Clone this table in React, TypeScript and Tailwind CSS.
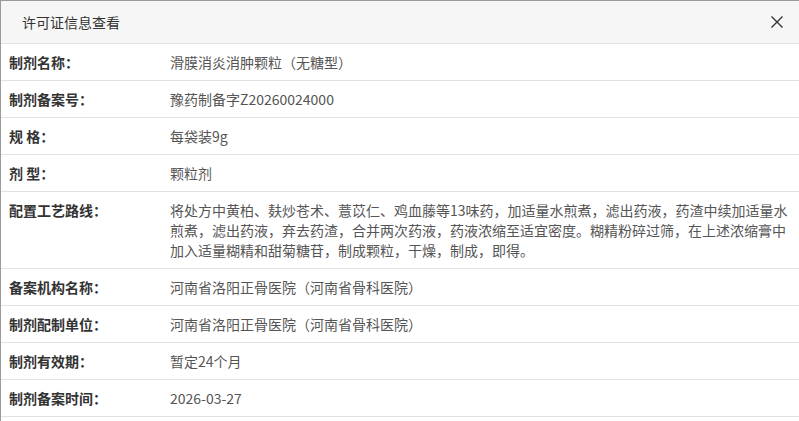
import React from "react";

const rows: { label: string; value: string; multi?: boolean }[] = [
  { label: "制剂名称：", value: "滑膜消炎消肿颗粒（无糖型）" },
  { label: "制剂备案号：", value: "豫药制备字Z20260024000" },
  { label: "规 格：", value: "每袋装9g" },
  { label: "剂 型：", value: "颗粒剂" },
  {
    label: "配置工艺路线：",
    value:
      "将处方中黄柏、麸炒苍术、薏苡仁、鸡血藤等13味药，加适量水煎煮，滤出药液，药渣中续加适量水煎煮，滤出药液，弃去药渣，合并两次药液，药液浓缩至适宜密度。糊精粉碎过筛，在上述浓缩膏中加入适量糊精和甜菊糖苷，制成颗粒，干燥，制成，即得。",
    multi: true,
  },
  { label: "备案机构名称：", value: "河南省洛阳正骨医院（河南省骨科医院）" },
  { label: "制剂配制单位：", value: "河南省洛阳正骨医院（河南省骨科医院）" },
  { label: "制剂有效期：", value: "暂定24个月" },
  { label: "制剂备案时间：", value: "2026-03-27" },
];

export default function App() {
  return (
    <div
      className="w-[799px] h-[421px] overflow-hidden bg-white border-t border-l border-[#9a9a9a]"
      style={{ fontFamily: '"Microsoft YaHei", "Noto Sans CJK SC", "Noto Sans", sans-serif' }}
    >
      <div className="h-[43px] bg-[#f6f6f6] border-b border-[#e3e3e3] flex items-center justify-between pl-[21px] pr-[15px]">
        <span className="text-[14px] text-[#333]">许可证信息查看</span>
        <svg width="14" height="14" viewBox="0 0 14 14" className="text-[#333]">
          <path d="M1.5 1.5 L12.5 12.5 M12.5 1.5 L1.5 12.5" stroke="currentColor" strokeWidth="1.4" fill="none" />
        </svg>
      </div>
      {rows.map((r) => (
        <div
          key={r.label}
          className={
            "flex border-b border-[#e2e2e2] text-[14px] " +
            (r.multi ? "py-2 leading-[20px] items-start" : "h-[37px] items-center")
          }
        >
          <div className="w-[169px] shrink-0 pl-[8px] font-bold text-[#333]">{r.label}</div>
          <div className="flex-1 pr-[5px] text-[#555]">{r.value}</div>
        </div>
      ))}
    </div>
  );
}
